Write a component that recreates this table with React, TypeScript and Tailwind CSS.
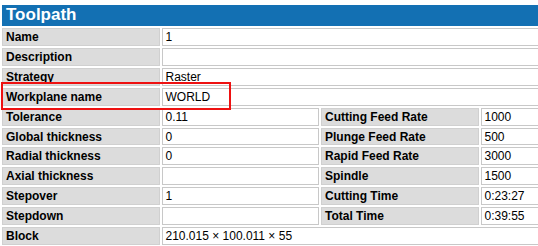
import React from "react";

type Cell = { label: string; value: string };

const fullRows: Cell[] = [
  { label: "Name", value: "1" },
  { label: "Description", value: "" },
  { label: "Strategy", value: "Raster" },
  { label: "Workplane name", value: "WORLD" },
];

const splitRows: [Cell, Cell][] = [
  [{ label: "Tolerance", value: "0.11" }, { label: "Cutting Feed Rate", value: "1000" }],
  [{ label: "Global thickness", value: "0" }, { label: "Plunge Feed Rate", value: "500" }],
  [{ label: "Radial thickness", value: "0" }, { label: "Rapid Feed Rate", value: "3000" }],
  [{ label: "Axial thickness", value: "" }, { label: "Spindle", value: "1500" }],
  [{ label: "Stepover", value: "1" }, { label: "Cutting Time", value: "0:23:27" }],
  [{ label: "Stepdown", value: "" }, { label: "Total Time", value: "0:39:55" }],
];

const labelCls =
  "bg-[#dcdcdc] border border-[#d0d0d0] px-[3px] pt-[2px] pb-0 font-bold text-black whitespace-nowrap overflow-hidden leading-[13.9px]";
const valueCls =
  "bg-white border border-[#c8c8c8] px-[3px] pt-[2px] pb-0 text-black whitespace-nowrap overflow-hidden leading-[13.9px]";

function Label({ text }: { text: string }) {
  return <td className={labelCls}>{text || "\u00a0"}</td>;
}

function Value({ text, span }: { text: string; span?: number }) {
  return (
    <td className={valueCls} colSpan={span}>
      {text || "\u00a0"}
    </td>
  );
}

export default function App() {
  return (
    <div
      className="relative w-[538px] h-[246px] overflow-hidden bg-white text-[12px] leading-[normal]"
      style={{ fontFamily: '"Liberation Sans", Arial, sans-serif' }}
    >
      <div className="pt-[5px]">
        <div className="ml-[2px] w-[636px] h-[21px] bg-[#1370b3] pl-[4px] text-white font-bold text-[17px] leading-[19px]">
          Toolpath
        </div>
        <table className="w-[640px] table-fixed border-separate border-spacing-[2px]">
          <colgroup>
            <col />
            <col />
            <col />
            <col />
          </colgroup>
          <tbody>
            {fullRows.map((r) => (
              <tr key={r.label}>
                <Label text={r.label} />
                <Value text={r.value} span={3} />
              </tr>
            ))}
            {splitRows.map(([a, b]) => (
              <tr key={a.label}>
                <Label text={a.label} />
                <Value text={a.value} />
                <Label text={b.label} />
                <Value text={b.value} />
              </tr>
            ))}
            <tr>
              <Label text="Block" />
              <Value text="210.015 × 100.011 × 55" span={3} />
            </tr>
          </tbody>
        </table>
      </div>
      {/* highlight around the workplane row */}
      <div className="absolute left-[1px] top-[82px] w-[230px] h-[28px] border-2 border-[#ee1111] pointer-events-none" />
    </div>
  );
}
